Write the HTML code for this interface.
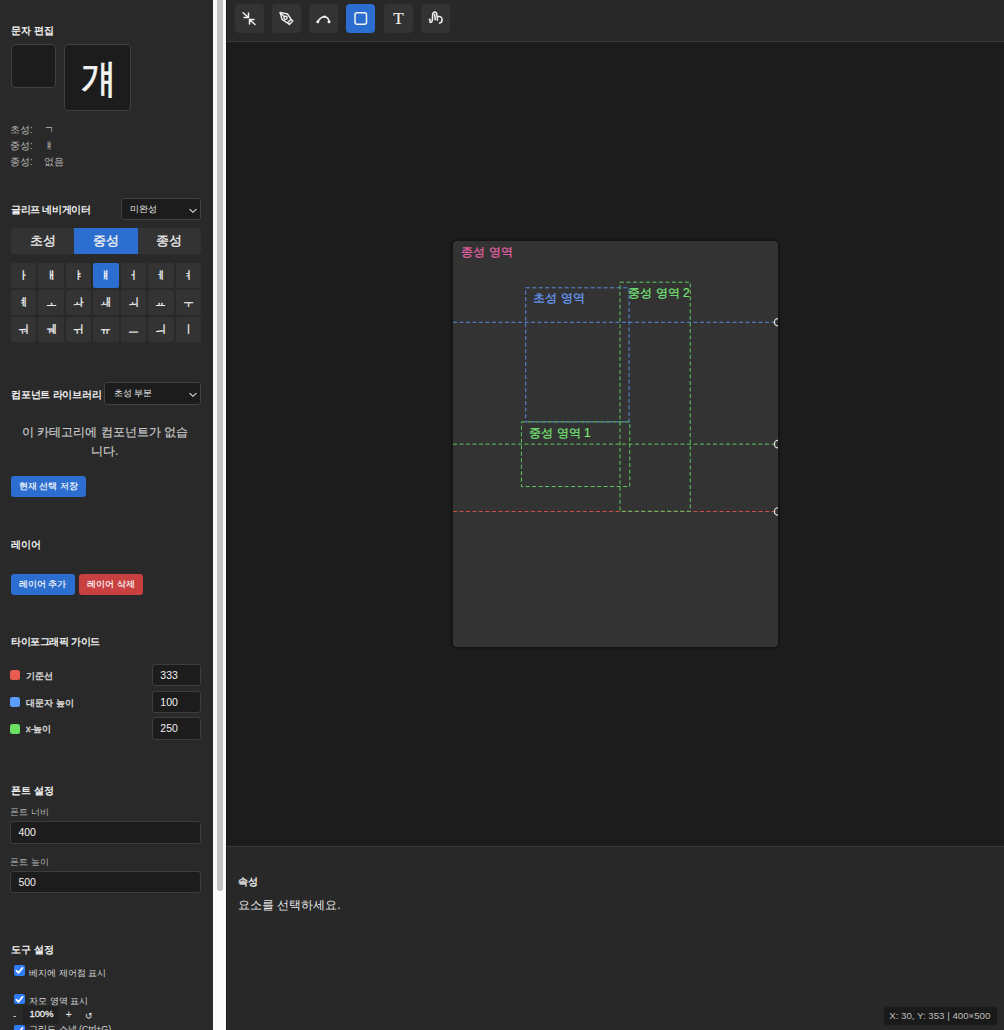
<!DOCTYPE html>
<html><head><meta charset="utf-8">
<style>
*{box-sizing:border-box;margin:0;padding:0}
html,body{width:1004px;height:1030px;overflow:hidden;background:#1c1c1c;font-family:"Liberation Sans",sans-serif;color:#e0e0e0}
.abs{position:absolute;white-space:nowrap}
#side{position:absolute;left:0;top:0;width:213px;height:1030px;background:#292929;overflow:hidden}
#track{position:absolute;left:213px;top:0;width:13px;height:1030px;background:#fafafa}
#thumb{position:absolute;left:216.5px;top:-5px;width:6.5px;height:896px;background:#c2c2c2;border-radius:4px}
#sep{position:absolute;left:226px;top:0;width:1px;height:1030px;background:#1a1a1a}
.h{position:absolute;left:11px;font-size:10px;font-weight:bold;color:#f2f2f2;white-space:nowrap;line-height:12px}
.sel{position:absolute;background:#1c1c1c;border:1px solid #424242;border-radius:3px;font-size:9px;color:#ececec;line-height:21px;padding-left:8.5px;white-space:nowrap}
.sel svg{position:absolute;right:2px;top:9px}
.tabs{position:absolute;left:11px;top:227.5px;width:190px;height:26.5px;background:#333;border-radius:3px;display:flex;overflow:hidden}
.tabs div{flex:1;text-align:center;font-size:13px;line-height:26px;color:#ececec;-webkit-text-stroke:0.35px #ececec}
.tabs .on{background:#2c6ecf;color:#fff}
.grid{position:absolute;left:11px;top:262.5px;width:190px;display:grid;grid-template-columns:repeat(7,1fr);gap:2.1px}
.grid div{height:25.2px;background:#333;border-radius:2px;text-align:center;font-size:11px;line-height:25px;color:#f2f2f2;-webkit-text-stroke:0.3px #f2f2f2}
.grid .on{background:#2c6ecf;color:#fff}
.btn{position:absolute;height:21.5px;border-radius:3px;font-size:9px;color:#fff;-webkit-text-stroke:0.15px #fff;text-align:center;line-height:21px;white-space:nowrap}
.blue{background:#2c6ecf}
.red{background:#c8403f}
.inp{position:absolute;background:#1c1c1c;border:1px solid #3d3d3d;border-radius:3px;font-size:10.5px;color:#f0f0f0;padding-left:7px;white-space:nowrap}
.lbl{position:absolute;font-size:9px;color:#b4b4b4;white-space:nowrap;line-height:12px}
.sw{position:absolute;left:10.2px;width:10.2px;height:10.1px;border-radius:2.5px}
.cb{position:absolute;left:14px;width:10.5px;height:10.8px;background:#2f7cf6;border-radius:2px}
.cb svg{position:absolute;left:0;top:0}
#toolbar{position:absolute;left:227px;top:0;width:777px;height:42px;background:#282828;border-bottom:1px solid #3a3a3a}
.tb{position:absolute;top:4px;width:29px;height:29px;background:#333;border-radius:4px}
.tb svg{position:absolute;left:0;top:0}
.tb.on{background:#2c6ecf}
#props{position:absolute;left:227px;top:845.5px;width:777px;height:185px;background:#282828;border-top:1px solid #3a3a3a}
#card{position:absolute;left:453.3px;top:240.5px;width:325px;height:406.25px;background:#333;border-radius:4px;box-shadow:0 0 0 1.5px #151515,0 0 3px 1px rgba(0,0,0,0.35)}
#card svg{position:absolute;left:0;top:0}
</style></head>
<body>
<div id="side">
  <div class="h" id="t1" style="top:25px">문자 편집</div>
  <div class="abs" style="left:10.5px;top:44.3px;width:45.5px;height:43.7px;background:#1c1c1c;border:1px solid #404040;border-radius:4px"></div>
  <div class="abs" style="left:64.2px;top:44px;width:66.8px;height:67px;background:#1c1c1c;border:1px solid #404040;border-radius:4px"></div>
  <div class="abs" id="gae" style="transform:scaleX(0.89);transform-origin:0 0;left:81px;top:53.5px;font-size:40px;line-height:48px;color:#f4f4f4;-webkit-text-stroke:0.7px #f4f4f4">걔</div>
  <div class="lbl" style="left:10px;top:124px;font-size:10px">초성:</div><div class="lbl" style="left:44px;top:124px;font-size:10px">ㄱ</div>
  <div class="lbl" style="left:10px;top:140px;font-size:10px">중성:</div><div class="lbl" style="left:44px;top:140px;font-size:10px">ㅒ</div>
  <div class="lbl" style="left:10px;top:156px;font-size:10px">종성:</div><div class="lbl" style="left:44px;top:156px;font-size:10px">없음</div>

  <div class="h" id="t2" style="top:204px;letter-spacing:-0.35px">글리프 네비게이터</div>
  <div class="sel" style="left:120.5px;top:197.5px;width:80.5px;height:22.7px">미완성<svg width="10" height="6" viewBox="0 0 10 6"><path d="M1.6 1.2 L5 4.3 L8.4 1.2" stroke="#e4e4e4" stroke-width="1.1" fill="none"/></svg></div>
  <div class="tabs"><div>초성</div><div class="on">중성</div><div>종성</div></div>
  <div class="grid">
    <div>ㅏ</div><div>ㅐ</div><div>ㅑ</div><div class="on">ㅒ</div><div>ㅓ</div><div>ㅔ</div><div>ㅕ</div>
    <div>ㅖ</div><div>ㅗ</div><div>ㅘ</div><div>ㅙ</div><div>ㅚ</div><div>ㅛ</div><div>ㅜ</div>
    <div>ㅝ</div><div>ㅞ</div><div>ㅟ</div><div>ㅠ</div><div>ㅡ</div><div>ㅢ</div><div>ㅣ</div>
  </div>

  <div class="h" id="t3" style="top:389px;letter-spacing:-0.25px">컴포넌트 라이브러리</div>
  <div class="sel" style="left:104.2px;top:382.3px;width:96.8px;height:23px">초성 부분<svg width="10" height="6" viewBox="0 0 10 6"><path d="M1.6 1.2 L5 4.3 L8.4 1.2" stroke="#e4e4e4" stroke-width="1.1" fill="none"/></svg></div>
  <div class="abs" style="left:22px;top:423px;font-size:12px;line-height:19.5px;color:#c8c8c8;-webkit-text-stroke:0.2px #c8c8c8">이 카테고리에 컴포넌트가 없습</div>
  <div class="abs" style="left:91px;top:442px;font-size:12px;line-height:19.5px;color:#c8c8c8;-webkit-text-stroke:0.2px #c8c8c8">니다.</div>
  <div class="btn blue" style="left:10.5px;top:475.8px;width:75.3px">현재 선택 저장</div>

  <div class="h" id="t4" style="top:538.5px">레이어</div>
  <div class="btn blue" style="left:10.5px;top:573.9px;width:64.2px">레이어 추가</div>
  <div class="btn red" style="left:78.9px;top:573.9px;width:64.4px">레이어 삭제</div>

  <div class="h" id="t5" style="top:636px;letter-spacing:-0.4px">타이포그래픽 가이드</div>
  <div class="sw" style="top:670px;background:#e85a50"></div><div class="lbl" style="left:26px;top:670px;color:#e2e2e2;-webkit-text-stroke:0.3px #e2e2e2">기준선</div>
  <div class="inp" style="left:152.3px;top:663.8px;width:48.5px;height:22.6px;line-height:21px">333</div>
  <div class="sw" style="top:697px;background:#5b9dfc"></div><div class="lbl" style="left:26px;top:697px;color:#e2e2e2;-webkit-text-stroke:0.3px #e2e2e2">대문자 높이</div>
  <div class="inp" style="left:152.3px;top:690.6px;width:48.5px;height:22.6px;line-height:21px">100</div>
  <div class="sw" style="top:723.7px;background:#6be063"></div><div class="lbl" style="left:26px;top:722.5px;color:#e2e2e2;-webkit-text-stroke:0.3px #e2e2e2">x-높이</div>
  <div class="inp" style="left:152.3px;top:717px;width:48.5px;height:22.6px;line-height:21px">250</div>

  <div class="h" id="t6" style="top:784.5px">폰트 설정</div>
  <div class="lbl" style="left:10px;top:806px">폰트 너비</div>
  <div class="inp" style="left:10.4px;top:821.3px;width:190.5px;height:22.3px;line-height:20.5px">400</div>
  <div class="lbl" style="left:10px;top:855.5px">폰트 높이</div>
  <div class="inp" style="left:10.4px;top:870.6px;width:190.5px;height:22px;line-height:20.5px">500</div>

  <div class="h" id="t7" style="top:944px">도구 설정</div>
  <div class="cb" style="top:965.4px"><svg width="11" height="11" viewBox="0 0 11 11"><path d="M2.4 5.6 L4.5 7.9 L8.6 2.8" stroke="#fff" stroke-width="1.7" fill="none" stroke-linecap="round" stroke-linejoin="round"/></svg></div>
  <div class="lbl" style="left:29px;top:966.5px;color:#dadada">베지에 제어점 표시</div>
  <div class="cb" style="top:993.5px"><svg width="11" height="11" viewBox="0 0 11 11"><path d="M2.4 5.6 L4.5 7.9 L8.6 2.8" stroke="#fff" stroke-width="1.7" fill="none" stroke-linecap="round" stroke-linejoin="round"/></svg></div>
  <div class="lbl" style="left:29px;top:994.5px;color:#dadada">자모 영역 표시</div>
  <div class="cb" style="top:1024.5px"><svg width="11" height="11" viewBox="0 0 11 11"><path d="M2.4 5.6 L4.5 7.9 L8.6 2.8" stroke="#fff" stroke-width="1.7" fill="none" stroke-linecap="round" stroke-linejoin="round"/></svg></div>
  <div class="lbl" style="left:29px;top:1022.5px;color:#dadada">그리드 스냅 (Ctrl+G)</div>
  <div class="abs" style="left:23.3px;top:1006px;width:35.7px;height:18.4px;background:#222"></div>
  <div class="abs" style="left:13px;top:1010px;font-size:10px;color:#ddd">-</div>
  <div class="abs" style="left:29.5px;top:1008px;font-size:9.6px;color:#e8e8e8;letter-spacing:-0.2px;-webkit-text-stroke:0.3px #e8e8e8">100%</div>
  <div class="abs" style="left:65.5px;top:1008px;font-size:11px;color:#e8e8e8">+</div>
  <div class="abs" style="left:85px;top:1010.5px;font-size:9px;color:#e8e8e8">↺</div>
</div>
<div id="track"></div><div id="thumb"></div><div id="sep"></div>

<div id="toolbar">
  <div class="tb" style="left:8px"><svg width="29" height="29" viewBox="0 0 29 29" fill="none" stroke="#f0f0f0" stroke-width="1.5" stroke-linecap="round" stroke-linejoin="round"><path d="M8 8.7 L13.5 13.5 M13.5 9 V13.5 H9 M20 20.5 L14.5 15.5 M14.5 20 V15.5 H19"/></svg></div>
  <div class="tb" style="left:45px"><svg width="29" height="29" viewBox="0 0 29 29" fill="none" stroke="#f0f0f0" stroke-width="1.4" stroke-linejoin="round"><path d="M8 8.4 L15.5 10 L19 15.2 L15.3 18.9 L10.1 15.4 Z M18.8 15 L20.8 17 L17.3 20.5 L15.3 18.7"/><circle cx="13.6" cy="13.8" r="1.6"/><path d="M8 8.4 L12.5 12.7"/></svg></div>
  <div class="tb" style="left:82px"><svg width="29" height="29" viewBox="0 0 29 29" fill="none" stroke="#f0f0f0" stroke-width="1.5" stroke-linecap="round"><path d="M8.8 17.8 Q11.5 12.6 15.5 12.7 Q19.6 13 20 17.8"/><circle cx="8.8" cy="17.8" r="1.5" fill="#f4f4f4" stroke="none"/><circle cx="20" cy="17.8" r="1.5" fill="#f4f4f4" stroke="none"/><circle cx="15.5" cy="12.7" r="1.3" fill="#f4f4f4" stroke="none"/></svg></div>
  <div class="tb on" style="left:119px"><svg width="29" height="29" viewBox="0 0 29 29" fill="none" stroke="#f4f4f4" stroke-width="1.5"><rect x="9" y="8.8" width="11.5" height="11.5" rx="2"/></svg></div>
  <div class="tb" style="left:157px"><div class="abs" style="left:0;width:29px;top:5px;text-align:center;font-family:'Liberation Serif',serif;font-size:17px;line-height:20px;color:#f0f0f0;-webkit-text-stroke:0.15px #f0f0f0">T</div></div>
  <div class="tb" style="left:194px"><svg width="29" height="29" viewBox="0 0 29 29" fill="none" stroke="#f0f0f0" stroke-width="1.5" stroke-linecap="round" stroke-linejoin="round"><path d="M8.4 15.4 Q9.6 15 8.9 17.4 Q8.7 19 10.6 18 L11.3 16.6 L11.7 9.6 Q13.2 6.6 15.6 9 L16.5 16.2 M13.6 10.2 L14.3 15.8 M16.6 12.6 Q20.6 11.6 21.1 15.5 Q21.2 18.6 18.6 19.1"/></svg></div>
</div>

<div id="card"><svg width="325" height="406.25" viewBox="0 0 400 500" fill="none" stroke-width="1.23" style="font-family:'Liberation Sans',sans-serif">
  <path d="M0 100 H400" stroke="#5b8de0" stroke-dasharray="4.9 3.1"/>
  <path d="M0 250 H400" stroke="#5fc95f" stroke-dasharray="4.9 3.1"/>
  <path d="M0 333 H400" stroke="#d9534a" stroke-dasharray="4.9 3.1"/>
  <rect x="89.5" y="57.6" width="127.2" height="165" stroke="#5b8de0" stroke-dasharray="4.9 3.1"/>
  <rect x="84.2" y="222.7" width="133.3" height="79.5" stroke="#5fc95f" stroke-dasharray="4.9 3.1"/>
  <rect x="205.5" y="50.7" width="86.5" height="281.9" stroke="#5fc95f" stroke-dasharray="4.9 3.1"/>
  <circle cx="400" cy="100" r="4.5" stroke="#ddd" stroke-width="1.5"/>
  <circle cx="400" cy="250" r="4.5" stroke="#ddd" stroke-width="1.5"/>
  <circle cx="400" cy="333" r="4.5" stroke="#ddd" stroke-width="1.5"/>
</svg>
  <div class="abs" style="left:8px;top:3px;font-size:12px;color:#ec64ac;-webkit-text-stroke:0.2px #ec64ac">종성 영역</div>
  <div class="abs" style="left:80px;top:49px;font-size:12px;color:#6aa0ff;-webkit-text-stroke:0.2px #6aa0ff">초성 영역</div>
  <div class="abs" style="left:175px;top:44px;font-size:12px;color:#78e878;-webkit-text-stroke:0.2px #78e878">중성 영역 2</div>
  <div class="abs" style="left:76px;top:184px;font-size:12px;color:#78e878;-webkit-text-stroke:0.2px #78e878">중성 영역 1</div>
</div>

<div id="props">
  <div class="abs" style="left:11px;top:28.5px;font-size:10px;font-weight:bold;color:#eee">속성</div>
  <div class="abs" style="left:11px;top:50px;font-size:12px;color:#e6e6e6">요소를 선택하세요.</div>
  <div class="abs" style="left:656.7px;top:160.5px;width:113.7px;height:18px;background:#1a1a1a;border-radius:3px;font-size:9.7px;color:#bdbdbd;line-height:18px;padding-left:5.5px">X: 30, Y: 353 | 400×500</div>
</div>
</body></html>
